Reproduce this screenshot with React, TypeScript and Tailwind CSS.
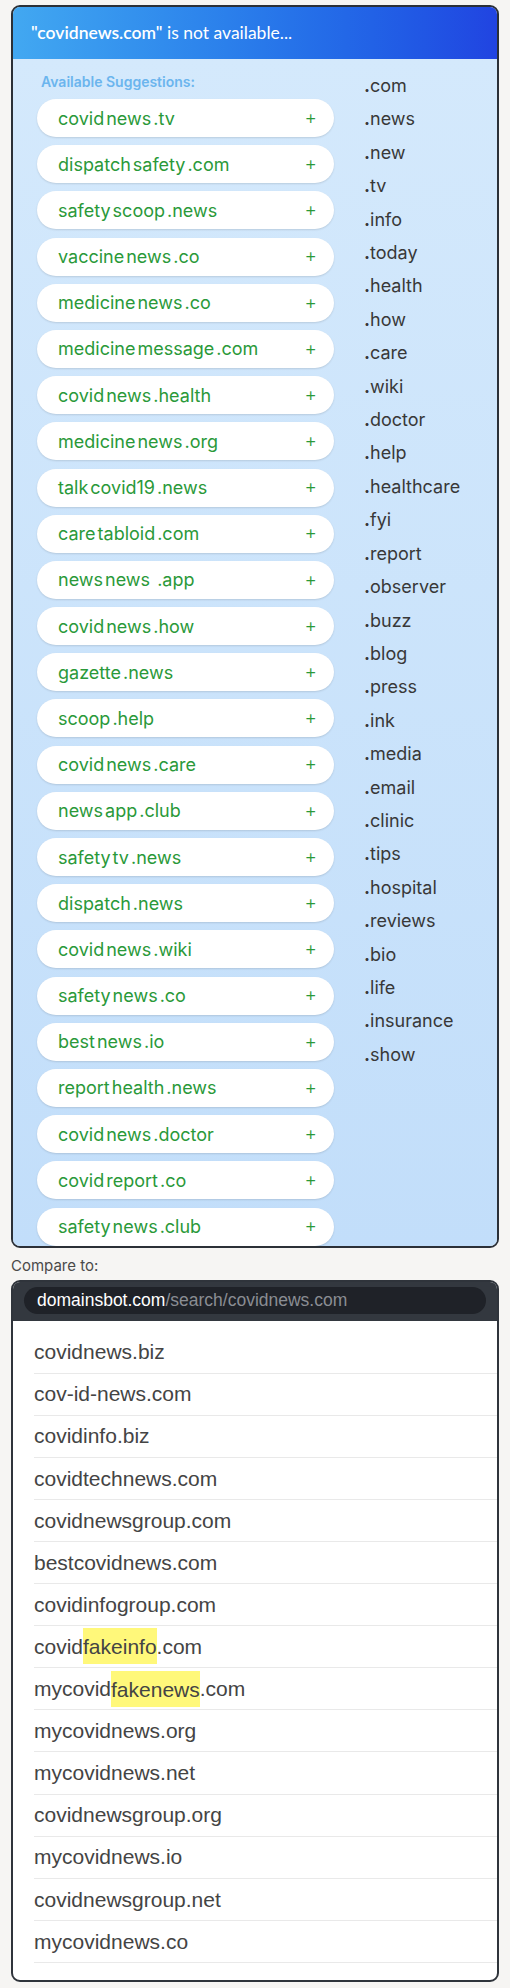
const suggestions: string[][] = [
  ['covid', 'news', '.tv'],
  ['dispatch', 'safety', '.com'],
  ['safety', 'scoop', '.news'],
  ['vaccine', 'news', '.co'],
  ['medicine', 'news', '.co'],
  ['medicine', 'message', '.com'],
  ['covid', 'news', '.health'],
  ['medicine', 'news', '.org'],
  ['talk', 'covid19', '.news'],
  ['care', 'tabloid', '.com'],
  ['news', 'news', ' .app'],
  ['covid', 'news', '.how'],
  ['gazette', '.news'],
  ['scoop', '.help'],
  ['covid', 'news', '.care'],
  ['news', 'app', '.club'],
  ['safety', 'tv', '.news'],
  ['dispatch', '.news'],
  ['covid', 'news', '.wiki'],
  ['safety', 'news', '.co'],
  ['best', 'news', '.io'],
  ['report', 'health', '.news'],
  ['covid', 'news', '.doctor'],
  ['covid', 'report', '.co'],
  ['safety', 'news', '.club'],
];

const tlds = [
  'com', 'news', 'new', 'tv', 'info', 'today', 'health', 'how', 'care', 'wiki',
  'doctor', 'help', 'healthcare', 'fyi', 'report', 'observer', 'buzz', 'blog', 'press', 'ink',
  'media', 'email', 'clinic', 'tips', 'hospital', 'reviews', 'bio', 'life', 'insurance', 'show',
];

// [before, highlighted, after]
const compared: [string, string, string][] = [
  ['covidnews.biz', '', ''],
  ['cov-id-news.com', '', ''],
  ['covidinfo.biz', '', ''],
  ['covidtechnews.com', '', ''],
  ['covidnewsgroup.com', '', ''],
  ['bestcovidnews.com', '', ''],
  ['covidinfogroup.com', '', ''],
  ['covid', 'fakeinfo', '.com'],
  ['mycovid', 'fakenews', '.com'],
  ['mycovidnews.org', '', ''],
  ['mycovidnews.net', '', ''],
  ['covidnewsgroup.org', '', ''],
  ['mycovidnews.io', '', ''],
  ['covidnewsgroup.net', '', ''],
  ['mycovidnews.co', '', ''],
];

const sf = { fontFamily: 'Inter, "Liberation Sans", sans-serif' };

export default function App() {
  return (
    <div className="min-h-[1988px] w-[510px] bg-[#f6f5f3] pt-[5px]" style={sf}>
      {/* Suggestions card */}
      <div className="mx-[11px] w-[488px] overflow-hidden rounded-[9px] border-2 border-[#2b3037]">
        <div className="flex h-[52px] items-center bg-linear-to-r from-[#42a8f1] to-[#2144e1] pl-[18px] text-[17.5px] text-white" style={{ fontFamily: 'Lato, "Noto Sans", sans-serif' }}>
          <span className="font-semibold">"covidnews.com"</span>
          <span>&nbsp;is not available...</span>
        </div>

        <div className="flex bg-linear-to-b from-[#d4e9fc] to-[#c2defa]">
          <div className="w-[321px] pl-[24px] pt-[14px]">
            <div className="mb-[8px] pl-[4px] text-[14px] leading-[18px] font-semibold text-[#6bb5ee]">
              Available Suggestions:
            </div>
            <div className="flex flex-col gap-[8.2px]">
              {suggestions.map((parts, i) => (
                <div
                  key={i}
                  className="flex h-[38px] w-[297px] items-center justify-between rounded-full bg-white pl-[21px] pr-[17px] shadow-[0_1px_2px_rgba(0,0,0,0.12)]"
                >
                  <span className="flex gap-[2px] text-[18px] text-[#2a9939]">
                    {parts.map((p, j) => (
                      <span key={j} className="whitespace-pre">{p}</span>
                    ))}
                  </span>
                  <span className="text-[19px] font-light text-[#2a9939]">+</span>
                </div>
              ))}
            </div>
          </div>

          <div className="pl-[30px] pt-[10px]">
            {tlds.map((t) => (
              <div key={t} className="text-[18px] leading-[33.4px] text-[#383838]">
                <span className="font-bold">.</span>
                {t}
              </div>
            ))}
          </div>
        </div>
      </div>

      <div className="mt-[9px] mb-[5px] pl-[11px] text-[15px] leading-[18px] text-[#4a4a4a]">Compare to:</div>

      {/* Compare card */}
      <div className="mx-[11px] w-[488px] overflow-hidden rounded-[9px] border-2 border-[#2f343b] bg-white">
        <div className="bg-[#33383f] px-[11px] pt-[5px] pb-[7px]">
          <div className="flex h-[27px] items-center rounded-full bg-[#1f2228] pl-[13px] text-[17.5px]" style={{ fontFamily: '"Liberation Sans", Arial, sans-serif' }}>
            <span className="text-white">domainsbot.com</span>
            <span className="text-[#8a8d93]">/search/covidnews.com</span>
          </div>
        </div>

        <div className="pt-[11px] pb-[17px]" style={{ fontFamily: '"Liberation Sans", Arial, sans-serif' }}>
          {compared.map(([a, hl, b], i) => (
            <div key={i} className="ml-[21px] flex h-[42.1px] items-center border-b border-[#e9e9e9] text-[21px] text-[#444]">
              <span>
                {a}
                {hl && <span className="bg-[#fff87a] py-[6.5px]">{hl}</span>}
                {b}
              </span>
            </div>
          ))}
        </div>
      </div>
    </div>
  );
}
